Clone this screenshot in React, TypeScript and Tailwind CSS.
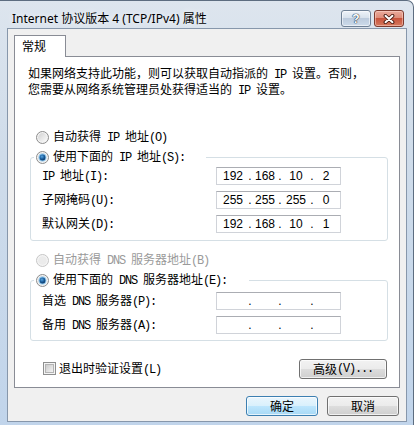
import React from "react";

// splits a label into CJK runs and ASCII runs; ASCII gets a narrow mono face like SimSun's half-width glyphs
function Txt({ s }: { s: string }) {
  const parts = s.split(/([\x20-\x7e]+)/);
  return (
    <>
      {parts.map((p, i) =>
        i % 2 === 1 ? (
          <span key={i} className="[font-family:'Liberation_Mono',monospace] tracking-[-1.2px]">
            {p}
          </span>
        ) : (
          <React.Fragment key={i}>{p}</React.Fragment>
        )
      )}
    </>
  );
}

function Radio({ checked, disabled }: { checked?: boolean; disabled?: boolean }) {
  if (disabled) {
    return (
      <svg width="13" height="13" viewBox="0 0 13 13" className="shrink-0">
        <circle cx="6.5" cy="6.5" r="6" fill="#f4f4f4" stroke="#c6c6c6" />
        <circle cx="6.5" cy="6.5" r="4.3" fill="#ebebeb" />
      </svg>
    );
  }
  return (
    <svg width="13" height="13" viewBox="0 0 13 13" className="shrink-0">
      <defs>
        <linearGradient id="rbg" x1="0" y1="0" x2="1" y2="1">
          <stop offset="0" stopColor="#d2d2d2" />
          <stop offset="1" stopColor="#fbfbfb" />
        </linearGradient>
        <radialGradient id="rdot" cx="0.4" cy="0.35" r="0.7">
          <stop offset="0" stopColor="#5aa6e0" />
          <stop offset="0.55" stopColor="#1c5f9e" />
          <stop offset="1" stopColor="#0c3461" />
        </radialGradient>
      </defs>
      <circle cx="6.5" cy="6.5" r="6" fill="#f3f3f3" stroke="#8c8c8c" />
      <circle cx="6.5" cy="6.5" r="4.4" fill="url(#rbg)" />
      {checked && (
        <>
          <circle cx="6.5" cy="6.5" r="3.9" fill="#8cc6ee" />
          <circle cx="6.5" cy="6.5" r="2.9" fill="url(#rdot)" />
        </>
      )}
    </svg>
  );
}

function Check() {
  return (
    <svg width="13" height="13" viewBox="0 0 13 13" className="shrink-0">
      <defs>
        <linearGradient id="cbg" x1="0" y1="0" x2="1" y2="1">
          <stop offset="0" stopColor="#c8c8c8" />
          <stop offset="1" stopColor="#f6f6f6" />
        </linearGradient>
      </defs>
      <rect x="0.5" y="0.5" width="12" height="12" fill="#f4f4f4" stroke="#8e8f8f" />
      <rect x="2.5" y="2.5" width="8" height="8" fill="url(#cbg)" stroke="#b4b4b4" />
    </svg>
  );
}

const segW = ["w-[32px]", "w-[28px]", "w-[30px]", "w-[26px]"];

function IpBox({ v }: { v?: string[] }) {
  return (
    <div className="w-[125px] h-[18px] border border-[#d0d3d9] border-t-[#abadb3] bg-white flex items-center [font-family:'Liberation_Sans',sans-serif] text-[12px] leading-[16px]">
      {segW.map((cls, i) => (
        <React.Fragment key={i}>
          {i > 0 && <span className="w-[2px] flex justify-center">.</span>}
          <span className={`${cls} text-center`}>{v ? v[i] : ""}</span>
        </React.Fragment>
      ))}
    </div>
  );
}

function Row({ label, v }: { label: string; v?: string[] }) {
  return (
    <div className="h-[18px] flex items-center">
      <span className="w-[174px] leading-[16px]">
        <Txt s={label} />
      </span>
      <IpBox v={v} />
    </div>
  );
}

function Btn({ children, primary, w }: { children: React.ReactNode; primary?: boolean; w: string }) {
  return (
    <div
      className={`${w} h-[20px] rounded-[3px] border flex items-center justify-center leading-[16px] shadow-[inset_0_0_0_1px_rgba(255,255,255,0.7)] ${
        primary
          ? "border-[#3c7fb1] bg-[linear-gradient(#eaf6fd,#d9f0fc_50%,#bee6fd_50%,#a7d9f5)]"
          : "border-[#707070] bg-[linear-gradient(#f2f2f2,#ebebeb_50%,#dddddd_50%,#cfcfcf)]"
      }`}
    >
      {children}
    </div>
  );
}

export default function App() {
  return (
    <div className="w-[415px] h-[425px] bg-white overflow-hidden [font-family:'Noto_Sans_CJK_SC',sans-serif] text-[12px] text-black">
      <div className="w-[414px] h-[440px] rounded-tr-[7px] border-t border-r border-[#5d6d80] bg-[linear-gradient(#dde5ee,#cfdcea_35%,#c0d4eb)] flex flex-col">
        {/* title bar */}
        <div className="h-[27px] flex items-start pt-[9px] pl-[12px] pr-[9px]">
          <div className="flex-1 h-[17px] leading-[17px] [font-family:'Noto_Sans','Noto_Sans_CJK_SC',sans-serif] text-[12px] [text-shadow:0_0_6px_#ffffff]">
            Internet 协议版本 4 (TCP/IPv4) 属性
          </div>
          <div className="flex gap-[3px]">
            <div className="w-[30px] h-[17px] rounded-[3px] border border-[#6f8196] bg-[linear-gradient(#eef3f9,#d8e2ed_45%,#bccbdd_50%,#cddbea)] shadow-[inset_0_0_0_1px_rgba(255,255,255,0.55)] flex items-center justify-center text-white font-bold text-[12px] leading-none [font-family:'Liberation_Sans',sans-serif] [text-shadow:0_0_1px_#1f3550,0_0_1px_#1f3550,0_0_1px_#1f3550]">
              ?
            </div>
            <div className="w-[30px] h-[17px] rounded-[3px] border border-[#7d3a2e] bg-[linear-gradient(#eaaa9c,#de8c79_45%,#c8533c_50%,#d57a5f)] shadow-[inset_0_0_0_1px_rgba(255,220,210,0.5)] flex items-center justify-center">
              <svg width="12" height="10" viewBox="0 0 12 10">
                <path d="M2.5 1.8 L9.5 8.2 M9.5 1.8 L2.5 8.2" stroke="#4a1d14" strokeWidth="3.8" strokeLinecap="round" />
                <path d="M2.5 1.8 L9.5 8.2 M9.5 1.8 L2.5 8.2" stroke="#ffffff" strokeWidth="2" strokeLinecap="round" />
              </svg>
            </div>
          </div>
        </div>

        {/* client area */}
        <div className="ml-[7px] w-[400px] h-[394px] border border-[#8797ab] bg-[#f0f0f0] flex flex-col pt-[6px] pl-[6px] pr-[6px]">
          {/* tab */}
          <div className="relative z-10 w-[52px] h-[22px] -mb-px border border-b-0 border-[#898c95] bg-white pl-[7px] pt-[2px] leading-[16px]">
            常规
          </div>
          {/* panel */}
          <div className="h-[332px] border border-[#898c95] bg-white flex flex-col">
            <div className="pl-[13px] pt-[9px] leading-[14px]">
              <div>
                <Txt s="如果网络支持此功能，则可以获取自动指派的 IP 设置。否则，" />
              </div>
              <div>
                <Txt s="您需要从网络系统管理员处获得适当的 IP 设置。" />
              </div>
            </div>

            <div className="mt-[31px] h-[16px] pl-[21px] flex items-center gap-[4px] leading-[16px]">
              <Radio />
              <span>
                <Txt s="自动获得 IP 地址(O)" />
              </span>
            </div>

            <fieldset className="mt-[4px] ml-[15px] mr-[11px] border border-[#d5dfe5] rounded-[3px]">
              <legend className="ml-[3px] pl-[2px] pr-[21px]">
                <div className="h-[16px] flex items-center gap-[4px] leading-[16px]">
                  <Radio checked />
                  <span>
                    <Txt s="使用下面的 IP 地址(S):" />
                  </span>
                </div>
              </legend>
              <div className="pl-[11px] pt-[2px] pb-[7px] flex flex-col gap-[6px]">
                <Row label="IP 地址(I):" v={["192", "168", "10", "2"]} />
                <Row label="子网掩码(U):" v={["255", "255", "255", "0"]} />
                <Row label="默认网关(D):" v={["192", "168", "10", "1"]} />
              </div>
            </fieldset>

            <div className="mt-[11px] h-[16px] pl-[21px] flex items-center gap-[4px] leading-[16px] text-[#9a9a9a]">
              <Radio disabled />
              <span>
                <Txt s="自动获得 DNS 服务器地址(B)" />
              </span>
            </div>

            <fieldset className="mt-[4px] ml-[15px] mr-[11px] border border-[#d5dfe5] rounded-[3px]">
              <legend className="ml-[3px] pl-[2px] pr-[22px]">
                <div className="h-[16px] flex items-center gap-[4px] leading-[16px]">
                  <Radio checked />
                  <span>
                    <Txt s="使用下面的 DNS 服务器地址(E):" />
                  </span>
                </div>
              </legend>
              <div className="pl-[11px] pt-[4px] pb-[6px] flex flex-col gap-[6px]">
                <Row label="首选 DNS 服务器(P):" />
                <Row label="备用 DNS 服务器(A):" />
              </div>
            </fieldset>

            <div className="mt-[18px] h-[19px] pl-[28px] pr-[12px] flex items-center justify-between">
              <div className="flex items-center gap-[3px] leading-[16px]">
                <Check />
                <span>
                  <Txt s="退出时验证设置(L)" />
                </span>
              </div>
              <Btn w="w-[88px]">
                <Txt s="高级(V)..." />
              </Btn>
            </div>
          </div>

          {/* dialog buttons */}
          <div className="mt-[8px] pr-[1px] flex justify-end gap-[9px]">
            <Btn w="w-[72px]" primary>
              确定
            </Btn>
            <Btn w="w-[72px]">取消</Btn>
          </div>
        </div>
      </div>
    </div>
  );
}
